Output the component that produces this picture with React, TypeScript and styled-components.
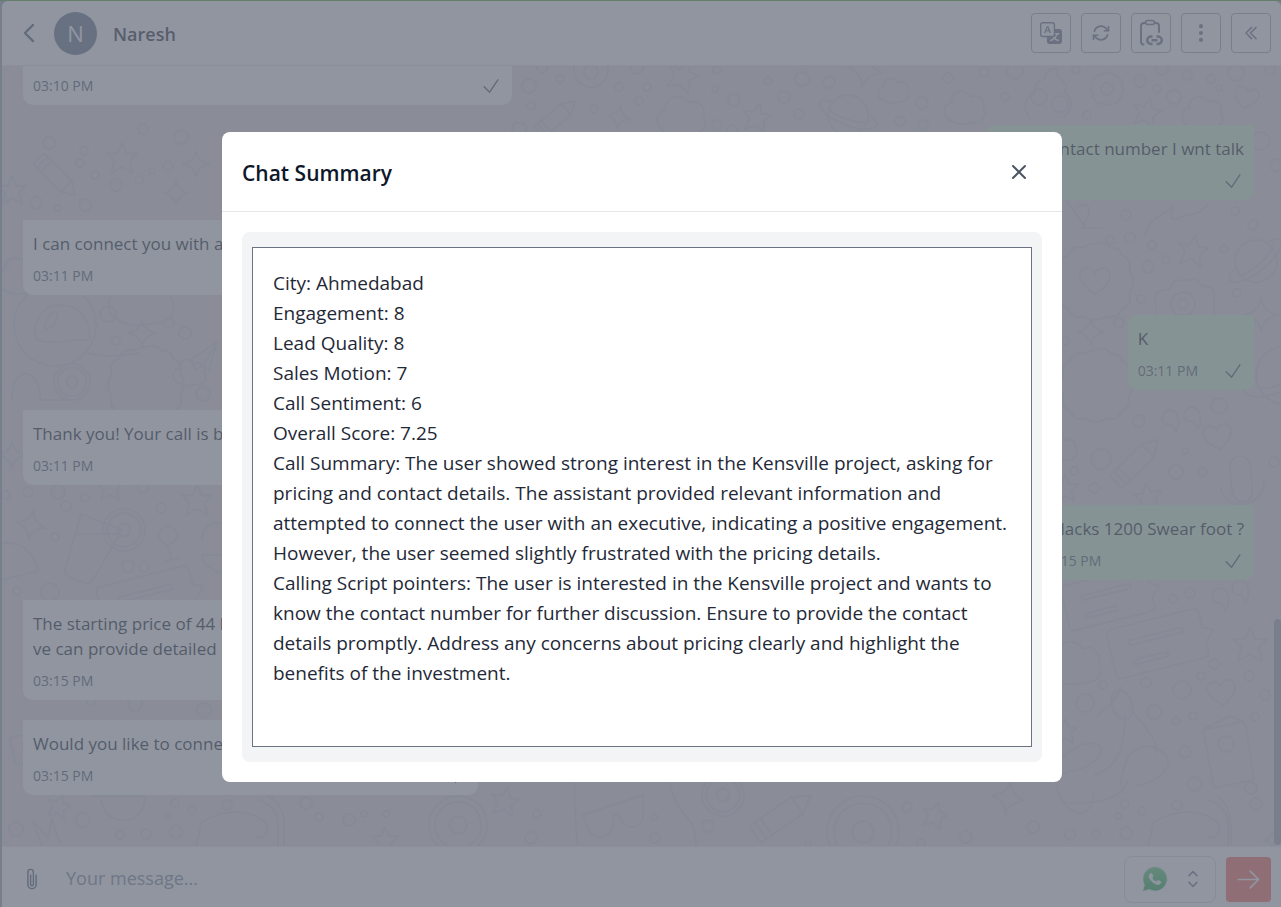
import React from "react";
import styled, { createGlobalStyle, css } from "styled-components";
import { BsPaperclip, BsThreeDotsVertical, BsTranslate } from "react-icons/bs";
import {
  HiOutlineArrowPath,
  HiOutlineArrowRight,
  HiOutlineCheck,
  HiOutlineChevronDoubleLeft,
  HiOutlineChevronLeft,
  HiOutlineChevronUpDown,
  HiOutlineXMark,
} from "react-icons/hi2";

const GlobalStyle = createGlobalStyle`
  *, *::before, *::after { box-sizing: border-box; }
  body {
    margin: 0;
    font-family: "Open Sans", "Noto Sans", sans-serif;
    color: #111827;
  }
  button, input, textarea { font-family: inherit; }
  h1, h2, p { margin: 0; }
`;

const Page = styled.div`
  display: flex;
  flex-direction: column;
  height: 100vh;
  overflow: hidden;
  background: #9ca3af;
  border-top: 1px solid #4ea52f;
  padding-left: 2px;
`;

const Header = styled.header`
  display: flex;
  align-items: center;
  flex: none;
  height: 65px;
  padding: 0 10px 0 14px;
  background: #ffffff;
  border-bottom: 1px solid #e5e7eb;
  border-radius: 6px 6px 0 0;
`;

const PlainButton = styled.button`
  display: flex;
  align-items: center;
  justify-content: center;
  padding: 0;
  border: 0;
  background: none;
  color: #4b5563;
`;

const Avatar = styled.div`
  display: flex;
  align-items: center;
  justify-content: center;
  width: 43px;
  height: 43px;
  margin: 0 16px 0 12px;
  border-radius: 50%;
  background: #5d6f88;
  color: #ffffff;
  font-size: 22px;
`;

const ContactName = styled.h1`
  flex: 1;
  padding-top: 2px;
  font-size: 18px;
  font-weight: 600;
  color: #1f2430;
`;

const Tools = styled.div`
  display: flex;
  gap: 10px;
`;

const ToolButton = styled(PlainButton)`
  width: 40px;
  height: 40px;
  border: 1px solid #9ca3af;
  border-radius: 4px;
  color: #6b7280;
`;

const Conversation = styled.main`
  position: relative;
  display: flex;
  flex: 1;
  min-height: 0;
  overflow: hidden;
  background: #e5dfda;
`;

const Wallpaper = styled.svg`
  position: absolute;
  inset: 0;
  width: 100%;
  height: 100%;
  fill: none;
  stroke: #d6d1d8;
  stroke-width: 2;
  stroke-linejoin: round;
  stroke-linecap: round;
`;

const Messages = styled.div`
  position: relative;
  display: flex;
  flex: 1;
  flex-direction: column;
  justify-content: flex-end;
  gap: 20px;
  padding: 0 20px 51px 21px;
`;

const Bubble = styled.article<{ $sent?: boolean }>`
  flex: none;
  padding: 11px 10px 8px;
  max-width: 60%;
  font-size: 17px;
  line-height: 25px;
  white-space: pre-line;
  ${(p) =>
    p.$sent
      ? css`
          align-self: flex-end;
          background: #d6f5d0;
          border-radius: 10px 0 10px 10px;
        `
      : css`
          align-self: flex-start;
          background: #ffffff;
          border-radius: 0 10px 10px 10px;
        `}
`;

const MediaPreview = styled.div`
  width: 469px;
  max-width: 100%;
  height: 160px;
  border-radius: 6px;
  background: #d1d5db;
`;

const Meta = styled.div`
  display: flex;
  align-items: center;
  justify-content: space-between;
  gap: 24px;
  margin-top: 8px;
  height: 23px;
  font-size: 14px;
  color: #4b5563;
`;

const ScrollTrack = styled.div`
  position: relative;
  display: flex;
  flex-direction: column;
  justify-content: flex-end;
  width: 7px;
  padding-bottom: 1px;
`;

const ScrollThumb = styled.div`
  height: 29%;
  border-radius: 4px;
  background: #a6a9b4;
`;

const Composer = styled.form`
  display: flex;
  align-items: center;
  flex: none;
  height: 61px;
  padding: 4px 10px 0 19px;
  background: #ffffff;
  border-top: 1px solid #e5e7eb;
`;

const MessageInput = styled.input`
  flex: 1;
  min-width: 0;
  margin-left: 23px;
  padding: 0 0 2px;
  border: 0;
  outline: 0;
  font-size: 18px;
  background: none;
  &::placeholder {
    color: #7d8493;
    opacity: 1;
  }
`;

const ChannelButton = styled(PlainButton)`
  gap: 12px;
  width: 92px;
  height: 47px;
  margin-right: 10px;
  padding-left: 8px;
  border: 1px solid #d1d5db;
  border-radius: 8px;
  color: #6b7280;
`;

const SendButton = styled(PlainButton)`
  width: 45px;
  height: 45px;
  border-radius: 4px;
  background: #ff6359;
  color: #ffffff;
`;

const Backdrop = styled.div`
  position: fixed;
  inset: 0;
  display: flex;
  align-items: center;
  justify-content: center;
  padding: 7px 0 0 3px;
  background: rgba(107, 114, 128, 0.75);
`;

const Dialog = styled.section`
  width: 840px;
  max-width: 94%;
  border-radius: 8px;
  background: #ffffff;
`;

const DialogHeader = styled.div`
  display: flex;
  align-items: center;
  justify-content: space-between;
  height: 80px;
  padding: 0 31px 0 20px;
  border-bottom: 1px solid #e5e7eb;
`;

const DialogTitle = styled.h2`
  padding-top: 2px;
  font-size: 21px;
  font-weight: 600;
  color: #0f172a;
`;

const DialogBody = styled.div`
  padding: 20px;
`;

const SummaryPanel = styled.div`
  display: flex;
  padding: 15px 10px;
  border-radius: 8px;
  background: #f3f4f6;
`;

const SummaryText = styled.textarea`
  flex: 1;
  min-width: 0;
  height: 500px;
  margin: 0;
  padding: 20px;
  border: 1px solid #6b7280;
  border-radius: 0;
  outline: 0;
  resize: none;
  background: #ffffff;
  color: #1f2937;
  font-size: 19px;
  line-height: 30px;
`;

type Placement = [x: number, y: number, size: number, turn?: number];

const rings: Placement[] = [
  [49, 143, 6], [84, 151, 4], [80, 163, 4], [181, 137, 7], [143, 129, 5], [116, 185, 6],
  [95, 175, 4], [139, 180, 4], [168, 166, 5], [36, 203, 6], [85, 205, 6], [58, 208, 3],
  [152, 171, 3], [108, 314, 8], [116, 341, 4], [169, 323, 5], [185, 333, 6], [203, 394, 7],
  [6, 495, 4], [28, 492, 5], [58, 492, 7], [66, 506, 5], [85, 498, 4], [143, 488, 5],
  [161, 508, 5], [55, 537, 4], [128, 566, 6], [144, 567, 5], [17, 591, 4], [50, 592, 9],
  [83, 820, 7], [16, 829, 7], [120, 835, 4], [146, 834, 5], [176, 832, 6], [175, 803, 4],
  [168, 816, 3], [192, 810, 4], [227, 805, 5], [306, 803, 6], [319, 817, 4], [349, 820, 6],
  [364, 814, 3], [204, 710, 7], [386, 814, 3], [135, 704, 7], [91, 702, 4],
  [529, 86, 7], [560, 79, 4], [591, 72, 7], [591, 70, 17], [619, 87, 4], [647, 87, 4],
  [639, 101, 4], [531, 106, 4], [594, 109, 4], [519, 129, 7], [734, 100, 6], [717, 125, 5],
  [768, 81, 4], [784, 97, 6], [802, 79, 7], [829, 82, 6], [799, 114, 5], [637, 68, 6],
  [717, 70, 4], [715, 89, 3], [900, 121, 5], [922, 103, 6], [923, 125, 5], [948, 78, 5],
  [984, 72, 5], [1015, 71, 8], [1005, 97, 4], [542, 68, 5], [732, 130, 5],
  [1076, 70, 4], [1162, 69, 6], [1187, 75, 5], [1140, 81, 6], [1157, 89, 4], [1211, 79, 4],
  [1219, 88, 3], [1174, 97, 7], [1236, 73, 8], [1270, 69, 5], [1107, 89, 6], [1087, 115, 4],
  [1126, 215, 5], [1130, 237, 5], [1152, 245, 4], [1148, 267, 6], [1166, 260, 4],
  [1224, 249, 4], [1253, 225, 5], [1235, 211, 4], [1237, 293, 4], [1141, 299, 4],
  [1119, 323, 5], [1065, 341, 4], [1110, 240, 4], [1261, 141, 9], [1276, 165, 6],
  [1101, 459, 10], [1139, 421, 6], [1176, 472, 7], [1203, 472, 4], [1094, 488, 5],
  [1219, 406, 8], [1185, 451, 3], [1074, 471, 4], [1190, 593, 5], [1173, 599, 4],
  [1103, 685, 4], [1146, 683, 5], [1182, 690, 9], [1201, 676, 4], [1214, 664, 5],
  [1249, 676, 5], [1154, 712, 7], [1176, 721, 4], [1193, 716, 4], [1085, 703, 9],
  [1185, 752, 6], [1255, 717, 4], [1265, 695, 5], [1274, 462, 5],
  [1070, 835, 5], [1096, 834, 4], [1126, 833, 6], [1125, 804, 4], [1118, 816, 3],
  [1142, 811, 4], [1177, 805, 5], [1256, 804, 6], [1251, 788, 6], [1195, 784, 7],
  [537, 814, 4], [531, 838, 6], [655, 838, 5], [708, 826, 6], [654, 817, 3], [907, 807, 5],
  [966, 837, 6], [1033, 827, 6], [921, 843, 4], [808, 845, 3],
];

const stars: Placement[] = [
  [122, 158, 15], [12, 190, 14], [110, 487, 13], [197, 500, 15], [683, 75, 16, 20],
  [757, 117, 14, 10], [1147, 112, 14, 15], [1193, 250, 15, 10], [1148, 497, 14, -10],
  [1250, 644, 17], [1065, 488, 13], [1065, 731, 12], [505, 801, 14, 10], [935, 815, 13, 15],
  [385, 840, 13], [59, 806, 12, 15],
];

const sparkles: Placement[] = [
  [196, 164, 13], [176, 193, 12], [142, 333, 14], [12, 455, 14], [619, 117, 12, 10],
  [865, 70, 18, 10], [1091, 332, 13], [1261, 315, 17], [1008, 798, 17, 10], [31, 525, 15, 10],
  [1272, 840, 8],
];

const hearts: Placement[] = [
  [1246, 98, 12, 15], [1095, 281, 15], [1218, 437, 14, -10], [1222, 693, 14, -10],
];

const clouds: Placement[] = [
  [682, 115, 24], [965, 107, 20], [1203, 112, 20], [142, 298, 32], [1075, 662, 26],
  [894, 90, 15], [190, 372, 16], [20, 275, 22], [1062, 448, 15],
];

const planets: Placement[] = [
  [1256, 261, 21, -35], [848, 115, 20, 25], [1285, 375, 29, -20],
];

const cookies: Placement[] = [[146, 385, 38], [1096, 386, 36], [1095, 282, 38], [1107, 89, 16]];

const discs: Placement[] = [[458, 825, 29], [72, 382, 18], [124, 530, 21], [863, 832, 36], [723, 795, 21]];

const cards: Placement[] = [[150, 600, 50, -14], [1110, 598, 46, -14], [1160, 643, 50, -14], [40, 745, 28, -14]];

const pencils: Placement[] = [[1137, 461, 30, -45], [557, 117, 24, -40], [783, 815, 34, -35], [57, 177, 26, 45]];

const shapes = {
  star: "M0 -10 L3 -3 L10 -3 L5 2 L7 10 L0 6 L-7 10 L-5 2 L-10 -3 L-3 -3 Z",
  sparkle: "M0 -10 Q1 -2 10 0 Q1 2 0 10 Q-1 2 -10 0 Q-1 -2 0 -10 Z",
  heart: "M0 9 C-5 5 -10 2 -10 -4 C-10 -10 -2 -10 0 -5 C2 -10 10 -10 10 -4 C10 2 5 5 0 9 Z",
  cloud: "M-7 7 C-12 5 -11 -2 -7 -2 C-7 -9 1 -9 3 -5 C7 -7 10 -3 9 0 C12 6 7 8 3 8 C-1 9 -4 9 -7 7 Z",
  planet: "M10 0 A10 10 0 1 1 -10 0 A10 10 0 1 1 10 0 M-9 -3 C-20 -2 -16 6 0 5 C16 4 20 -4 9 -4 M-10 0 C-12 2 -4 3 1 2 C8 1 12 -1 10 -2",
  cookie: "M0 -10 Q3 -11 4 -9 Q7 -9 7 -7 Q10 -6 9 -3 Q11 0 9 3 Q10 6 7 7 Q6 10 3 9 Q0 11 -3 9 Q-6 10 -7 7 Q-10 6 -9 3 Q-11 0 -9 -3 Q-10 -6 -7 -7 Q-6 -10 -3 -9 Q-2 -10 0 -10 Z",
  disc: "M10 0 A10 10 0 1 1 -10 0 A10 10 0 1 1 10 0 M8 0 A8 8 0 1 1 -8 0 A8 8 0 1 1 8 0 M3 0 A3 3 0 1 1 -3 0 A3 3 0 1 1 3 0",
  card: "M-9 -5 H8 Q9 -5 9 -4 V-1 L11 0 L9 2 V4 Q9 5 8 5 H-9 Q-10 5 -10 4 V-4 Q-10 -5 -9 -5 Z M-6 -2 H5 V-1 H-6 Z M-6 2 H1 V3 H-6 Z",
  pencil: "M-9 -3 H5 L10 0 L5 3 H-9 Q-10 3 -10 2 V-2 Q-10 -3 -9 -3 Z M-6 -3 V3 M5 -3 V3 M-8 -3 V3",
};

function Doodles({ path, at }: { path: string; at: Placement[] }) {
  return (
    <>
      {at.map(([x, y, size, turn = 0]) => (
        <path
          key={`${x}-${y}`}
          d={path}
          vectorEffect="non-scaling-stroke"
          transform={`translate(${x} ${y}) rotate(${turn}) scale(${size / 10})`}
        />
      ))}
    </>
  );
}

function DoodleWallpaper() {
  return (
    <Wallpaper aria-hidden="true">
      <g transform="translate(-2 -66)">
        {rings.map(([x, y, r]) => (
          <circle key={`${x}-${y}-${r}`} cx={x} cy={y} r={r} />
        ))}
        <Doodles path={shapes.star} at={stars} />
        <Doodles path={shapes.sparkle} at={sparkles} />
        <Doodles path={shapes.heart} at={hearts} />
        <Doodles path={shapes.cloud} at={clouds} />
        <Doodles path={shapes.planet} at={planets} />
        <Doodles path={shapes.cookie} at={cookies} />
        <Doodles path={shapes.disc} at={discs} />
        <Doodles path={shapes.card} at={cards} />
        <Doodles path={shapes.pencil} at={pencils} />
        {/* balloon */}
        <circle cx="55" cy="325" r="41" />
        <path d="M37 340C30 322 44 304 62 305s28 14 28 35C70 338 55 346 37 340ZM46 330c-3-6 4-18 9-18s2 10-4 15Z" />
        <path d="M88 353c20 5 30 3 50 0M12 400c0-24 10-30 20-24 8 6 8 20 8 24h30" />
        {/* glass */}
        <path d="M81 514 65 570q0 6 6 8l15 5q6 1 8-5l28-48ZM77 534h44" />
        <path d="M2 543c20-2 34 12 36 28L2 580M202 540c0-20 20-20 24-12M202 555h24M202 555q0 12 20 18" />
        <path d="m190 360 27-18-8 28-7-4-6 4ZM203 366l14-24" />
        {/* camera */}
        <path d="m1157 315-2-18q0-5 5-6l10-2 4-8 22-2 6 7 8 1q4 1 4 6v22" />
        <circle cx="1183" cy="304" r="12" />
        <circle cx="1183" cy="304" r="5" />
        {/* microphones */}
        <path d="M1230 470q0-14 10-14t11 14l1 20q0 12-9 12t-11-12ZM1221 488c2 24 44 22 43-8" />
        <circle cx="168" cy="535" r="9" />
        <path d="m167 545 5 15M164 562l14-4" />
        {/* speech quotes */}
        <path d="M1175 432c6-6 4-22-5-22s-11 15-1 15q5 0 6 7ZM1197 429c6-6 4-22-5-22s-11 15-1 15q5 0 6 7ZM1225 610c6-6 4-22-5-22s-11 15-1 15q5 0 6 7ZM1245 602c6-6 4-22-5-22s-11 15-1 15q5 0 6 7Z" />
        {/* banana and rocket */}
        <path d="M1097 717c6-10 14-8 24-30M1125 715c0 40-12 54-30 60M1134 713c16 20 24 30 22 40M1121 784c4-44 30-44 46-28 4 10-4 24-30 30M1062 758c20-20 44-18 38-4-8 14-24 16-38 20" />
        <ellipse cx="1122" cy="705" rx="10" ry="15" transform="rotate(-20 1122 705)" />
        {/* gift bag */}
        <path d="m1203 730 38-8q4 0 5 4l8 54-40 8ZM1205 728l26-12 12 5" />
        <circle cx="1226" cy="744" r="8" />
        {/* swirl with eyes */}
        <path d="M1030 118q-12-16 5-25-2-12 10-14 0-10 12-11-2 8 5 12 8 6 2 12 14 10 0 25" />
        <circle cx="1039" cy="97" r="8" />
        <circle cx="1060" cy="104" r="8" />
        {/* headphones */}
        <path d="M258 800c24 8 20 22 20 46M268 796c20 10 16 30 16 50M196 846l6-24c20-12 44-14 60-2 10 8 4 20-6 17M1208 800c24 8 20 22 20 46M1217 796c16 10 14 30 14 50M1148 846l6-24c20-12 44-14 60-2 10 8 4 20-6 17" />
        {/* sunglasses */}
        <path d="m583 815 60-20v22c-3 14-20 14-24-3l-6 2c4 26-22 26-26 10Z" />
        <path d="M1145 235c4-16 14-18 28-28-2 12-6 16 14 8 20-4 14-6 22-12M1066 200l20 28M1078 206q20-6 4 22h20M1062 802c40 4 60-4 66-22M1056 784c6 30 34 42 38 10" />
        <path d="M91 796h54c0 32-40 32-44 4M42 846l-10-26 16 18 4-20 8 26M577 846c0-20-4-40-2-62M670 784c10 40 24 24 26 62" />
      </g>
    </Wallpaper>
  );
}

function ClipboardLinkIcon() {
  return (
    <svg width="24" height="28" viewBox="0 0 24 28" fill="none" stroke="currentColor" aria-hidden="true">
      <path d="M6.500 4H5Q2 4 2 7V22.500Q2 25.500 4.500 25.500M15.500 4H17Q20 4 20 7V13" strokeWidth="2" strokeLinecap="round" />
      <rect x="6.500" y="1.500" width="9" height="4" rx="2" strokeWidth="1.500" />
      <path d="M13.500 17.500h-1.500a3.750 3.750 0 0 0 0 7.500h1.500M17.500 17.500h1.500a3.750 3.750 0 0 1 0 7.500h-1.500M12.500 21.250h6" strokeWidth="2.500" />
    </svg>
  );
}

function WhatsAppIcon() {
  return (
    <svg width="26" height="28" viewBox="-24 8 496 496" aria-hidden="true">
      <defs>
        <linearGradient id="whatsapp-green" x1="0" y1="0" x2="0" y2="1">
          <stop offset="0" stopColor="#56d169" />
          <stop offset="1" stopColor="#18a848" />
        </linearGradient>
      </defs>
      <path
        d="M380.9 97.1C339 55.1 283.2 32 223.9 32c-122.4 0-222 99.600-222 222 0 39.100 10.200 77.300 29.600 111L0 480l117.700-30.900c32.400 17.700 68.900 27 106.100 27h.1c122.300 0 224.100-99.600 224.100-222 0-59.300-25.200-115-67.100-157z"
        fill="url(#whatsapp-green)"
        stroke="#e8eaee"
        strokeWidth="36"
        paintOrder="stroke"
      />
      <path
        d="M325.1 300.5c-5.500-2.800-32.800-16.200-37.900-18-5.100-1.900-8.800-2.800-12.500 2.800-3.700 5.600-14.300 18-17.600 21.800-3.200 3.700-6.500 4.200-12 1.400-32.600-16.300-54-29.100-75.500-66-5.700-9.800 5.700-9.100 16.300-30.300 1.800-3.700.9-6.900-.5-9.700-1.400-2.800-12.500-30.100-17.100-41.200-4.500-10.800-9.100-9.300-12.500-9.500-3.200-.2-6.900-.2-10.600-.2-3.700 0-9.700 1.400-14.800 6.900-5.100 5.600-19.400 19-19.400 46.300 0 27.300 19.900 53.700 22.600 57.400 2.800 3.700 39.100 59.700 94.800 83.800 35.200 15.200 49 16.500 66.600 13.900 10.700-1.600 32.800-13.400 37.400-26.400 4.600-13 4.600-24.100 3.200-26.400-1.300-2.500-5-3.900-10.500-6.600z"
        fill="#ffffff"
        stroke="#ffffff"
        strokeWidth="12"
      />
    </svg>
  );
}

type Message = { text?: string; time: string; sent?: boolean };

const messages: Message[] = [
  { time: "03:10 PM" },
  { text: "Need contact number I wnt talk", time: "03:10 PM", sent: true },
  { text: "I can connect you with an executive right away.", time: "03:11 PM" },
  { text: "K", time: "03:11 PM", sent: true },
  { text: "Thank you! Your call is being connected.", time: "03:11 PM" },
  { text: "In lacks 1200 Swear foot ?", time: "03:15 PM", sent: true },
  {
    text: "The starting price of 44 lacs is for the plot. Our executi\nve can provide detailed information.",
    time: "03:15 PM",
  },
  { text: "Would you like to connect with our property executive?", time: "03:15 PM" },
];

const summary = [
  "City: Ahmedabad",
  "Engagement: 8",
  "Lead Quality: 8",
  "Sales Motion: 7",
  "Call Sentiment: 6",
  "Overall Score: 7.25",
  "Call Summary: The user showed strong interest in the Kensville project, asking for pricing and contact details. The assistant provided relevant information and attempted to connect the user with an executive, indicating a positive engagement. However, the user seemed slightly frustrated with the pricing details.",
  "Calling Script pointers: The user is interested in the Kensville project and wants to know the contact number for further discussion. Ensure to provide the contact details promptly. Address any concerns about pricing clearly and highlight the benefits of the investment.",
].join("\n");

export default function App() {
  return (
    <>
      <GlobalStyle />
      <Page>
        <Header>
          <PlainButton type="button" aria-label="Back">
            <HiOutlineChevronLeft size={26} strokeWidth={2} />
          </PlainButton>
          <Avatar>N</Avatar>
          <ContactName>Naresh</ContactName>
          <Tools>
            <ToolButton type="button" aria-label="Translate">
              <BsTranslate size={22} />
            </ToolButton>
            <ToolButton type="button" aria-label="Refresh">
              <HiOutlineArrowPath size={20} strokeWidth={2} />
            </ToolButton>
            <ToolButton type="button" aria-label="Chat summary">
              <ClipboardLinkIcon />
            </ToolButton>
            <ToolButton type="button" aria-label="More options">
              <BsThreeDotsVertical size={22} />
            </ToolButton>
            <ToolButton type="button" aria-label="Expand details">
              <HiOutlineChevronDoubleLeft size={18} strokeWidth={2} />
            </ToolButton>
          </Tools>
        </Header>
        <Conversation>
          <DoodleWallpaper />
          <Messages>
            {messages.map((message, index) => (
              <Bubble key={index} $sent={message.sent}>
                {message.text ? <p>{message.text}</p> : <MediaPreview />}
                <Meta>
                  <time>{message.time}</time>
                  <HiOutlineCheck size={22} aria-hidden="true" />
                </Meta>
              </Bubble>
            ))}
          </Messages>
          <ScrollTrack>
            <ScrollThumb />
          </ScrollTrack>
        </Conversation>
        <Composer>
          <PlainButton type="button" aria-label="Attach a file">
            <BsPaperclip size={22} />
          </PlainButton>
          <MessageInput type="text" aria-label="Message" placeholder="Your message..." />
          <ChannelButton type="button" aria-label="Channel: WhatsApp">
            <WhatsAppIcon />
            <HiOutlineChevronUpDown size={26} />
          </ChannelButton>
          <SendButton type="submit" aria-label="Send">
            <HiOutlineArrowRight size={27} />
          </SendButton>
        </Composer>
      </Page>
      <Backdrop>
        <Dialog role="dialog" aria-modal="true" aria-labelledby="summary-title">
          <DialogHeader>
            <DialogTitle id="summary-title">Chat Summary</DialogTitle>
            <PlainButton type="button" aria-label="Close">
              <HiOutlineXMark size={24} strokeWidth={2} />
            </PlainButton>
          </DialogHeader>
          <DialogBody>
            <SummaryPanel>
              <SummaryText aria-labelledby="summary-title" defaultValue={summary} />
            </SummaryPanel>
          </DialogBody>
        </Dialog>
      </Backdrop>
    </>
  );
}
